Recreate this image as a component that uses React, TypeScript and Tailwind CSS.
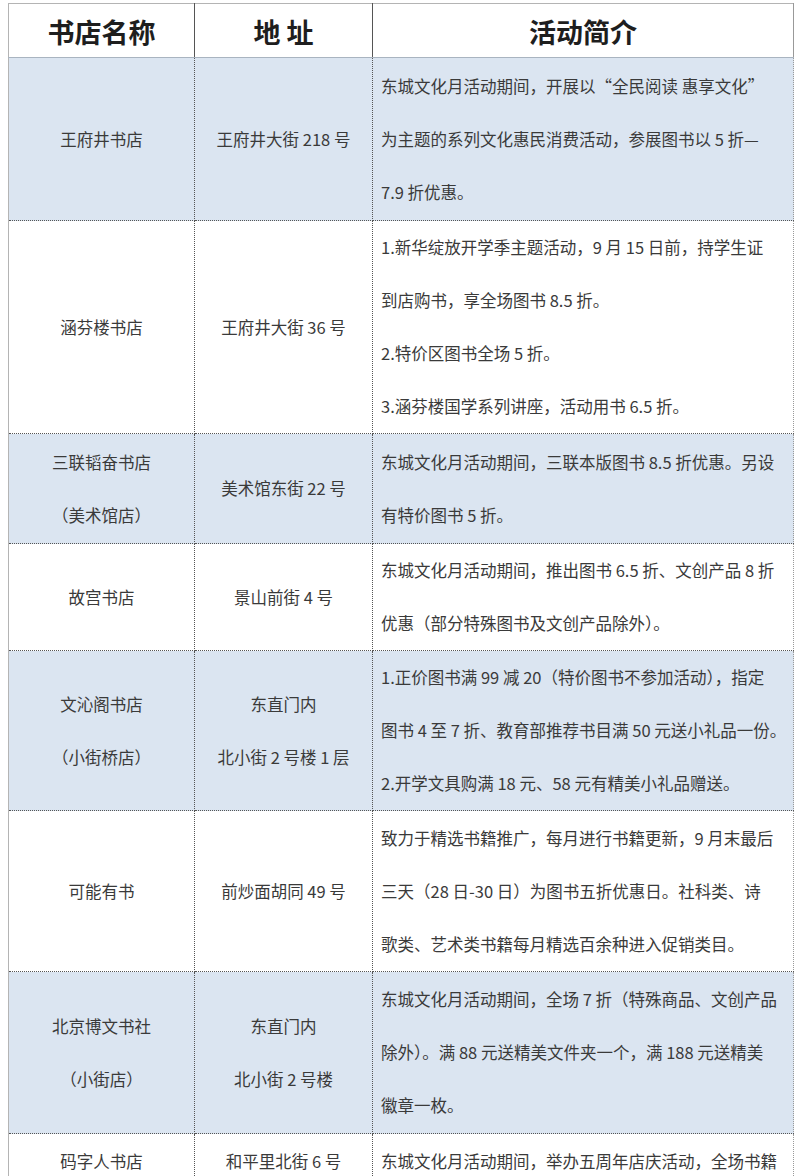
import React from "react";

type Row = {
  name: string[];
  address: string[];
  intro: string[];
  height: number;
  shaded: boolean;
};

const rows: Row[] = [
  {
    name: ["王府井书店"],
    address: ["王府井大街 218 号"],
    intro: [
      "东城文化月活动期间，开展以“全民阅读 惠享文化”",
      "为主题的系列文化惠民消费活动，参展图书以 5 折—",
      "7.9 折优惠。",
    ],
    height: 163,
    shaded: true,
  },
  {
    name: ["涵芬楼书店"],
    address: ["王府井大街 36 号"],
    intro: [
      "1.新华绽放开学季主题活动，9 月 15 日前，持学生证",
      "到店购书，享全场图书 8.5 折。",
      "2.特价区图书全场 5 折。",
      "3.涵芬楼国学系列讲座，活动用书 6.5 折。",
    ],
    height: 212,
    shaded: false,
  },
  {
    name: ["三联韬奋书店", "（美术馆店）"],
    address: ["美术馆东街 22 号"],
    intro: [
      "东城文化月活动期间，三联本版图书 8.5 折优惠。另设",
      "有特价图书 5 折。",
    ],
    height: 110,
    shaded: true,
  },
  {
    name: ["故宫书店"],
    address: ["景山前街 4 号"],
    intro: [
      "东城文化月活动期间，推出图书 6.5 折、文创产品 8 折",
      "优惠（部分特殊图书及文创产品除外）。",
    ],
    height: 107,
    shaded: false,
  },
  {
    name: ["文沁阁书店", "（小街桥店）"],
    address: ["东直门内", "北小街 2 号楼 1 层"],
    intro: [
      "1.正价图书满 99 减 20（特价图书不参加活动），指定",
      "图书 4 至 7 折、教育部推荐书目满 50 元送小礼品一份。",
      "2.开学文具购满 18 元、58 元有精美小礼品赠送。",
    ],
    height: 160,
    shaded: true,
  },
  {
    name: ["可能有书"],
    address: ["前炒面胡同 49 号"],
    intro: [
      "致力于精选书籍推广，每月进行书籍更新，9 月末最后",
      "三天（28 日-30 日）为图书五折优惠日。社科类、诗",
      "歌类、艺术类书籍每月精选百余种进入促销类目。",
    ],
    height: 161,
    shaded: false,
  },
  {
    name: ["北京博文书社", "（小街店）"],
    address: ["东直门内", "北小街 2 号楼"],
    intro: [
      "东城文化月活动期间，全场 7 折（特殊商品、文创产品",
      "除外）。满 88 元送精美文件夹一个，满 188 元送精美",
      "徽章一枚。",
    ],
    height: 162,
    shaded: true,
  },
  {
    name: ["码字人书店"],
    address: ["和平里北街 6 号"],
    intro: ["东城文化月活动期间，举办五周年店庆活动，全场书籍"],
    height: 56,
    shaded: false,
  },
];

const Lines = ({ lines }: { lines: string[] }) => (
  <>
    {lines.map((line, i) => (
      <div key={i} className="whitespace-nowrap">
        {line}
      </div>
    ))}
  </>
);

export default function App() {
  return (
    <div className="min-h-[1176px] overflow-hidden bg-white pl-2 pt-[3px] font-['Noto_Sans_CJK_SC',sans-serif]">
      <table className="w-[785px] table-fixed border-collapse border-l border-t border-solid border-[#b4b4b4]">
        <colgroup>
          <col className="w-[186px]" />
          <col className="w-[178px]" />
          <col className="w-[421px]" />
        </colgroup>
        <thead>
          <tr className="h-[54px] bg-white text-[27px] font-bold text-[#1e1e1e]">
            <th className="border-b border-r border-b-solid border-b-[#a9b4c0] border-r-dotted border-r-[#555] pt-[4px] text-center font-bold">
              书店名称
            </th>
            <th className="border-b border-r border-b-solid border-b-[#a9b4c0] border-r-dotted border-r-[#555] pt-[4px] text-center font-bold">
              地 址
            </th>
            <th className="border-b border-r border-b-solid border-b-[#a9b4c0] border-r-dotted border-r-[#999] pt-[4px] text-center font-bold">
              活动简介
            </th>
          </tr>
        </thead>
        <tbody className="text-[16.5px] leading-[53px] text-[#3a3a3a]">
          {rows.map((row, i) => (
            <tr
              key={i}
              style={{ height: row.height }}
              className={row.shaded ? "bg-[#dbe5f1]" : "bg-white"}
            >
              <td className="border border-dotted border-[#555] text-center align-middle">
                <Lines lines={row.name} />
              </td>
              <td className="border border-dotted border-[#555] text-center align-middle">
                <Lines lines={row.address} />
              </td>
              <td className="border border-dotted border-[#555] border-r-[#999] pl-[8px] text-left align-middle">
                <Lines lines={row.intro} />
              </td>
            </tr>
          ))}
        </tbody>
      </table>
    </div>
  );
}
